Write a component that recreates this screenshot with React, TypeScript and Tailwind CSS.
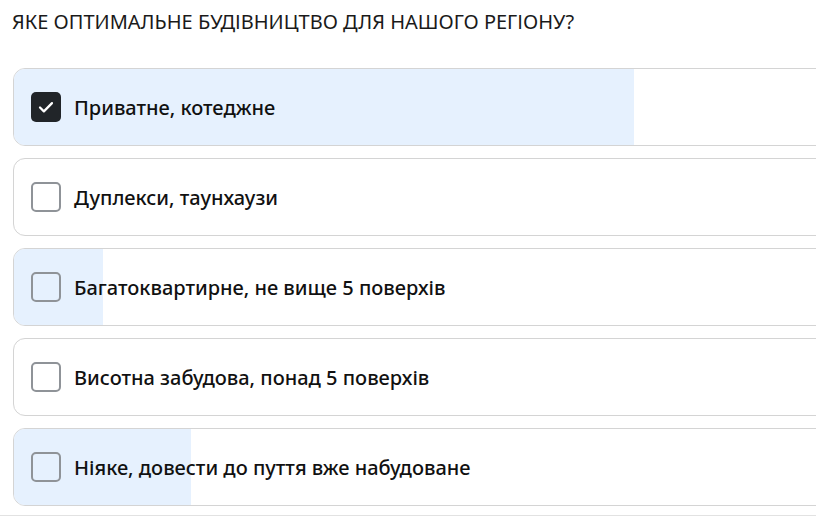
const options = [
  { label: "Приватне, котеджне", checked: true, fill: 620 },
  { label: "Дуплекси, таунхаузи", checked: false, fill: 0 },
  { label: "Багатоквартирне, не вище 5 поверхів", checked: false, fill: 89 },
  { label: "Висотна забудова, понад 5 поверхів", checked: false, fill: 0 },
  { label: "Ніяке, довести до пуття вже набудоване", checked: false, fill: 177 },
];

const Check = () => (
  <svg viewBox="0 0 16 16" className="w-[20px] h-[20px]" fill="none">
    <path d="M3.2 8.4l3.1 3.1 6.5-6.6" stroke="white" strokeWidth="1.8" strokeLinecap="round" strokeLinejoin="round" />
  </svg>
);

export default function App() {
  return (
    <div className="w-[816px] h-[519px] overflow-hidden bg-white font-['Noto_Sans',sans-serif] text-[#111]">
      <div className="pt-[8px] pl-[12px]">
        <h2 className="text-[20px] font-normal leading-[27px] text-[#1a1a1a]">
          ЯКЕ ОПТИМАЛЬНЕ БУДІВНИЦТВО ДЛЯ НАШОГО РЕГІОНУ?
        </h2>
        <div className="mt-[33px] flex flex-col gap-[12px] pl-[1px]">
          {options.map((o) => (
            <div
              key={o.label}
              className="relative w-[840px] h-[78px] rounded-[12px] border border-[#d4d4d4] overflow-hidden flex items-center"
            >
              {o.fill > 0 && (
                <div className="absolute left-0 top-0 bottom-0 bg-[#e6f1fe]" style={{ width: o.fill }} />
              )}
              <div className="relative flex items-center gap-[13px] pl-[17px]">
                {o.checked ? (
                  <div className="w-[30px] h-[30px] rounded-[5px] bg-[#212529] flex items-center justify-center">
                    <Check />
                  </div>
                ) : (
                  <div className="w-[30px] h-[30px] rounded-[5px] border-2 border-[#8f9398]" />
                )}
                <span className="text-[20px] font-medium leading-[28px] pt-[2px]">{o.label}</span>
              </div>
            </div>
          ))}
        </div>
      </div>
      <div className="mt-[9px] border-t border-[#e2e2e2]" />
    </div>
  );
}
